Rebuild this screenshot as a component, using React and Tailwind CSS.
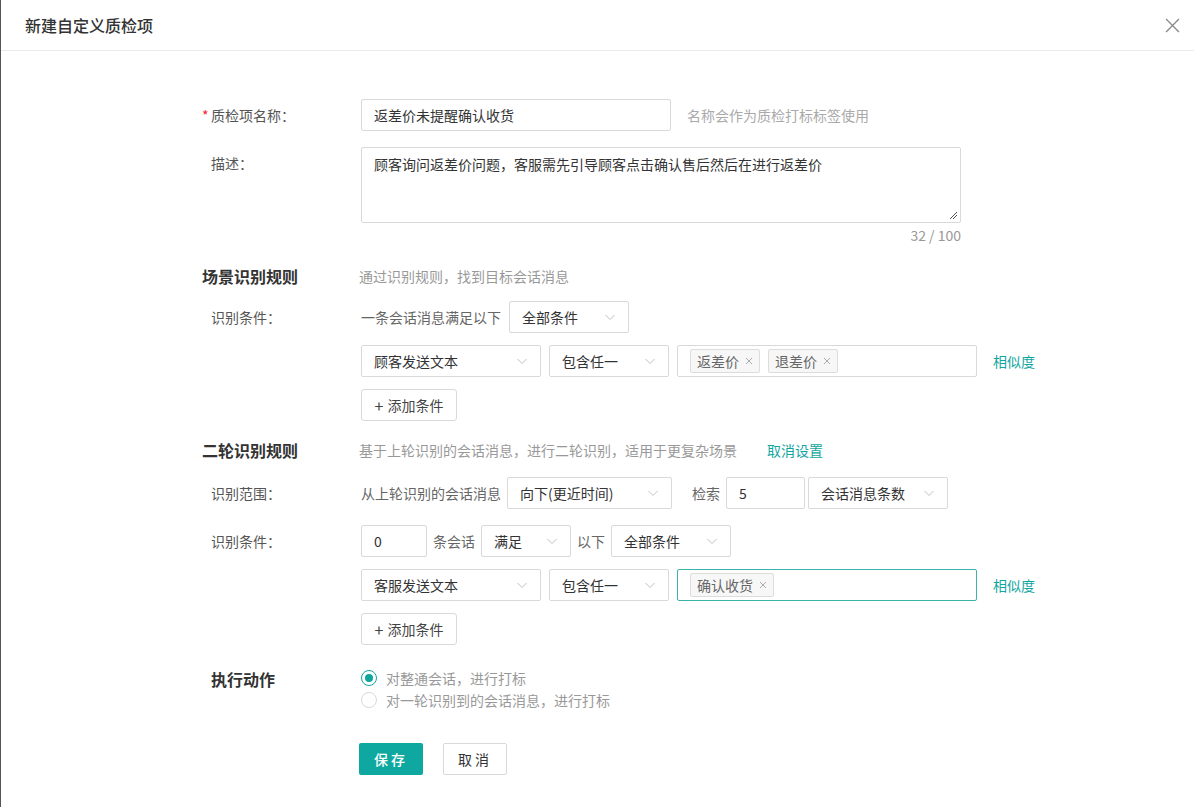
import React from 'react'

const font = { fontFamily: '"Noto Sans CJK SC", "Noto Sans", sans-serif' }

const Chevron = () => (
  <svg className="h-3 w-3 text-[#c0c0c0]" viewBox="0 0 12 12" fill="none" stroke="currentColor" strokeWidth="1">
    <path d="M1.5 4l4.5 4.5L10.5 4" />
  </svg>
)

const Select = ({ value, width }) => (
  <div className={`flex h-[32px] items-center justify-between rounded-[2px] border border-[#d9d9d9] bg-white pl-3 pr-3 text-[14px] text-[#333] ${width}`}>
    <span>{value}</span>
    <Chevron />
  </div>
)

const Input = ({ value, width }) => (
  <div className={`flex h-[32px] items-center rounded-[2px] border border-[#d9d9d9] bg-white px-3 text-[14px] text-[#333] ${width}`}>
    {value}
  </div>
)

const Tag = ({ children }) => (
  <span className="flex h-[24px] items-center gap-1.5 rounded-[2px] border border-[#dcdcdc] bg-[#f7f7f7] px-[6px] text-[14px] text-[#666]">
    {children}
    <svg className="h-2 w-2 text-[#aaa]" viewBox="0 0 8 8" stroke="currentColor" strokeWidth="1">
      <path d="M1 1l6 6M7 1L1 7" />
    </svg>
  </span>
)

const AddButton = () => (
  <div className="flex h-[32px] w-[96px] items-center justify-center gap-1 rounded-[3px] border border-[#d9d9d9] bg-white text-[14px] text-[#444]">
    <span className="text-[16px] leading-none">+</span> 添加条件
  </div>
)

const Label = ({ children }) => (
  <div className="w-[159px] shrink-0 pl-[9px] text-[14px] text-[#555]">{children}</div>
)

const Radio = ({ checked, label }) => (
  <div className="flex h-[22px] items-center gap-[9px] text-[14px] text-[#999]">
    <span className={`flex h-[16px] w-[16px] items-center justify-center rounded-full border ${checked ? 'border-[#11a59f]' : 'border-[#d9d9d9]'}`}>
      {checked && <span className="h-[8px] w-[8px] rounded-full bg-[#11a59f]" />}
    </span>
    {label}
  </div>
)

export default function App() {
  return (
    <div style={font} className="min-h-[807px] w-[1194px] border-l border-[#555] bg-white leading-[22px]">
      {/* Header */}
      <div className="flex h-[51px] items-center justify-between border-b border-[#ebebeb] pl-[24px] pr-[14px]">
        <h1 className="text-[16px] font-medium text-[#333]">新建自定义质检项</h1>
        <svg className="h-[15px] w-[15px] text-[#888]" viewBox="0 0 14 14" stroke="currentColor" strokeWidth="1.2">
          <path d="M1 1l12 12M13 1L1 13" />
        </svg>
      </div>

      <div className="pl-[201px] pt-[48px]">
        {/* Name */}
        <div className="flex items-center">
          <div className="flex w-[159px] shrink-0 text-[14px] text-[#555]">
            <span className="w-[9px] text-[#f5222d]">*</span>质检项名称：
          </div>
          <Input value="返差价未提醒确认收货" width="w-[310px]" />
          <span className="ml-[16px] text-[14px] text-[#aaa]">名称会作为质检打标标签使用</span>
        </div>

        {/* Description */}
        <div className="mt-[16px] flex items-start">
          <div className="w-[159px] shrink-0 pl-[9px] pt-[5px] text-[14px] text-[#555]">描述：</div>
          <div className="w-[600px]">
            <div className="relative h-[76px] rounded-[2px] border border-[#d9d9d9] px-3 py-[5px] text-[14px] text-[#333]">
              顾客询问返差价问题，客服需先引导顾客点击确认售后然后在进行返差价
              <svg className="absolute bottom-[2px] right-[2px] h-[10px] w-[10px] text-[#555]" viewBox="0 0 10 10" stroke="currentColor" strokeWidth="1">
                <path d="M9 2L2 9M9 5L5 9" />
              </svg>
            </div>
            <div className="mt-[1px] text-right text-[14px] text-[#999]">32 / 100</div>
          </div>
        </div>

        {/* Section 1 */}
        <div className="mt-[19px] flex items-center">
          <div className="w-[157px] shrink-0 text-[16px] font-bold text-[#333]">场景识别规则</div>
          <span className="text-[14px] text-[#999]">通过识别规则，找到目标会话消息</span>
        </div>

        <div className="mt-[14px] flex items-center">
          <Label>识别条件：</Label>
          <span className="mr-[8px] text-[14px] text-[#666]">一条会话消息满足以下</span>
          <Select value="全部条件" width="w-[120px]" />
        </div>

        <div className="mt-[12px] flex items-center">
          <div className="w-[159px] shrink-0" />
          <Select value="顾客发送文本" width="w-[180px]" />
          <div className="ml-[8px]"><Select value="包含任一" width="w-[120px]" /></div>
          <div className="ml-[8px] flex h-[32px] w-[300px] items-center gap-[8px] rounded-[2px] border border-[#d9d9d9] px-[12px]">
            <Tag>返差价</Tag>
            <Tag>退差价</Tag>
          </div>
          <span className="ml-[16px] text-[14px] text-[#11a59f]">相似度</span>
        </div>

        <div className="mt-[12px] flex">
          <div className="w-[159px] shrink-0" />
          <AddButton />
        </div>

        {/* Section 2 */}
        <div className="mt-[18px] flex items-center">
          <div className="w-[157px] shrink-0 text-[16px] font-bold text-[#333]">二轮识别规则</div>
          <span className="text-[14px] text-[#999]">基于上轮识别的会话消息，进行二轮识别，适用于更复杂场景</span>
          <span className="ml-[30px] text-[14px] text-[#11a59f]">取消设置</span>
        </div>

        <div className="mt-[16px] flex items-center">
          <Label>识别范围：</Label>
          <span className="mr-[6px] text-[14px] text-[#666]">从上轮识别的会话消息</span>
          <Select value="向下(更近时间)" width="w-[165px]" />
          <span className="ml-[20px] mr-[6px] text-[14px] text-[#666]">检索</span>
          <Input value="5" width="w-[79px]" />
          <div className="ml-[3px]"><Select value="会话消息条数" width="w-[140px]" /></div>
        </div>

        <div className="mt-[16px] flex items-center">
          <Label>识别条件：</Label>
          <Input value="0" width="w-[66px]" />
          <span className="mx-[6px] text-[14px] text-[#666]">条会话</span>
          <Select value="满足" width="w-[90px]" />
          <span className="mx-[6px] text-[14px] text-[#666]">以下</span>
          <Select value="全部条件" width="w-[120px]" />
        </div>

        <div className="mt-[12px] flex items-center">
          <div className="w-[159px] shrink-0" />
          <Select value="客服发送文本" width="w-[180px]" />
          <div className="ml-[8px]"><Select value="包含任一" width="w-[120px]" /></div>
          <div className="ml-[8px] flex h-[32px] w-[300px] items-center gap-[8px] rounded-[2px] border border-[#3bb3aa] px-[12px]">
            <Tag>确认收货</Tag>
          </div>
          <span className="ml-[16px] text-[14px] text-[#11a59f]">相似度</span>
        </div>

        <div className="mt-[12px] flex">
          <div className="w-[159px] shrink-0" />
          <AddButton />
        </div>

        {/* Action */}
        <div className="mt-[22px] flex items-start">
          <div className="w-[159px] shrink-0 pl-[9px] text-[16px] font-bold leading-[24px] text-[#333]">执行动作</div>
          <div className="flex flex-col">
            <Radio checked label="对整通会话，进行打标" />
            <Radio label="对一轮识别到的会话消息，进行打标" />
          </div>
        </div>

        <div className="mt-[32px] flex gap-[20px] pl-[157px]">
          <div className="flex h-[32px] w-[64px] items-center justify-center rounded-[2px] bg-[#0fa8a0] text-[14px] font-medium tracking-[3px] text-white">保存</div>
          <div className="flex h-[32px] w-[64px] items-center justify-center rounded-[2px] border border-[#d9d9d9] bg-white text-[14px] tracking-[3px] text-[#333]">取消</div>
        </div>
      </div>
    </div>
  )
}
